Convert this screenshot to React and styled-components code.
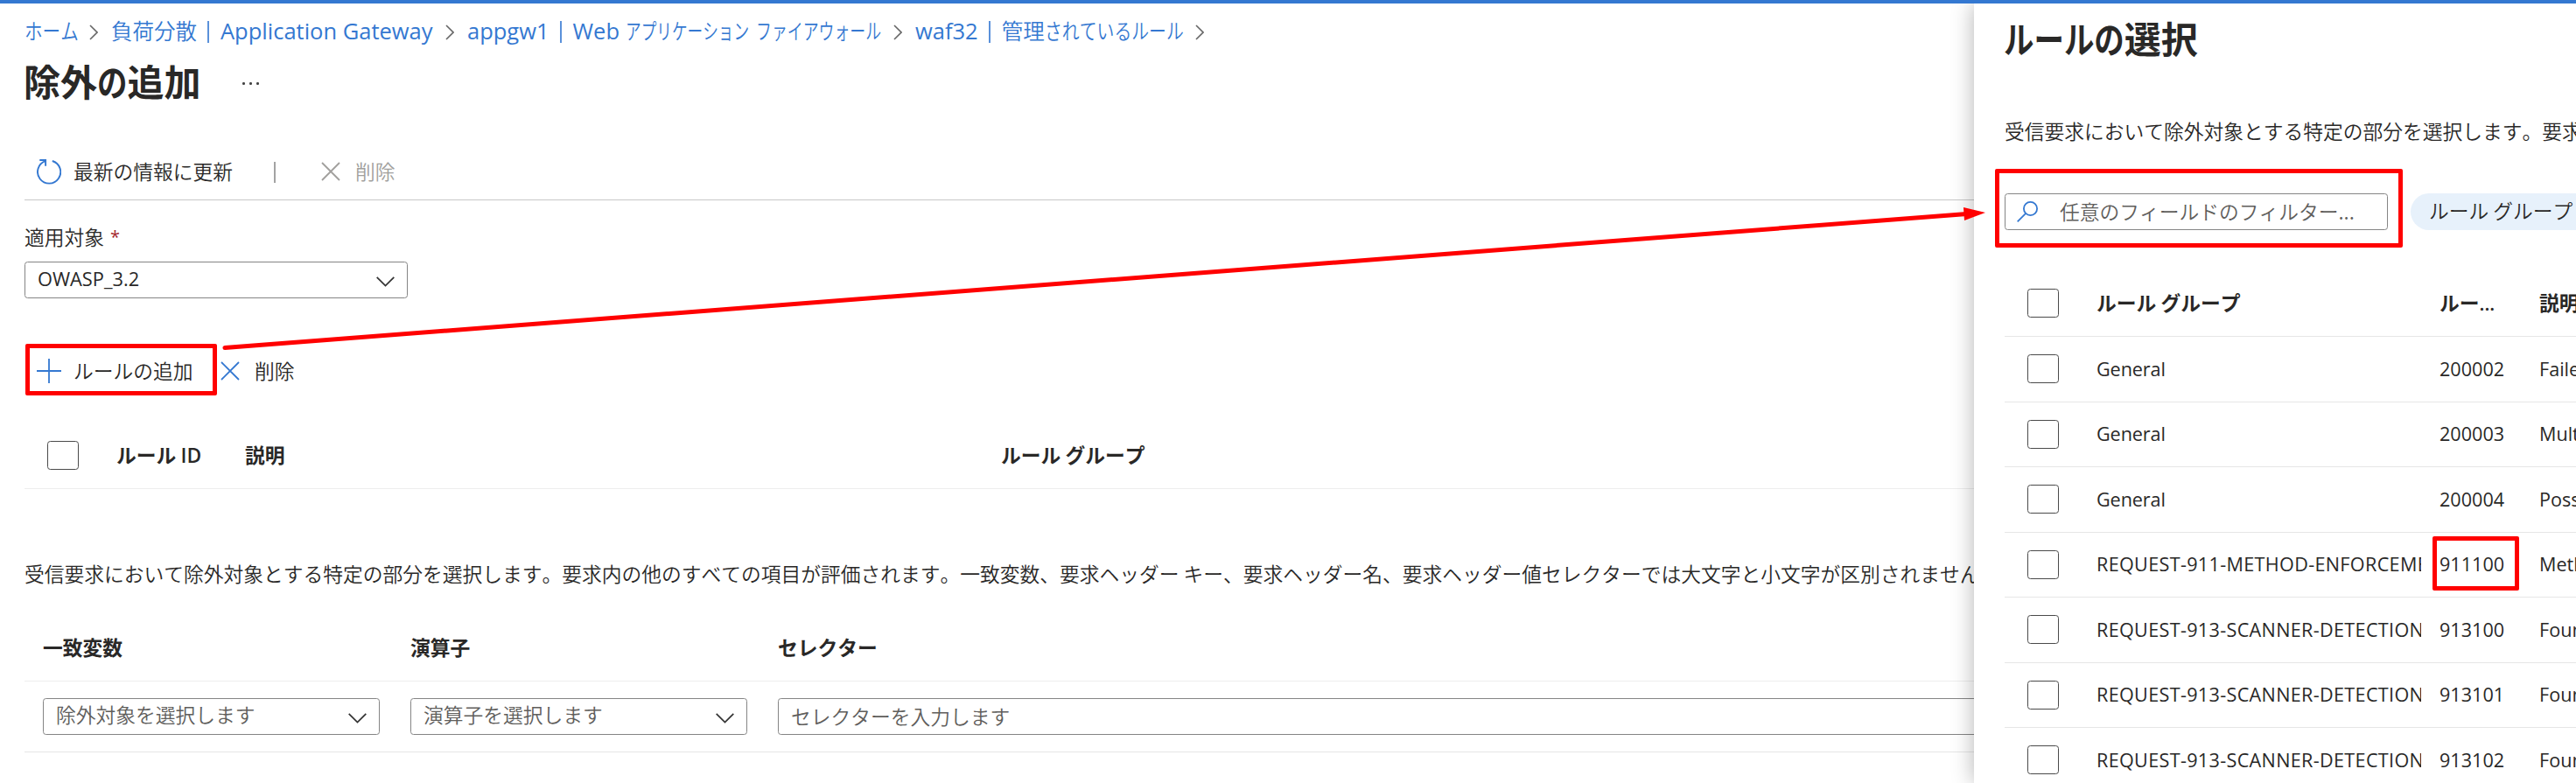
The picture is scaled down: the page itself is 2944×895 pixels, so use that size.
import React from "react";
import styled, { createGlobalStyle } from "styled-components";

const GlobalStyle = createGlobalStyle`
  * { box-sizing: border-box; }
  body {
    margin: 0;
    background: #fff;
    color: #292827;
    font-family: "Open Sans", "Noto Sans CJK JP", sans-serif;
    font-size: 22.75px;
    overflow: hidden;
  }
`;

const Screen = styled.div`
  position: relative;
  width: 2944px;
  height: 895px;
  overflow: hidden;
  display: flex;
  flex-direction: column;
`;
const TopBar = styled.div`
  flex: none;
  height: 4px;
  background: #3478d1;
  z-index: 2;
`;
const Body = styled.div`
  flex: 1;
  display: flex;
  min-height: 0;
`;
const Main = styled.main`
  width: 2256px;
  padding-left: 28px;
  display: flex;
  flex-direction: column;
  white-space: nowrap;
  overflow: hidden;
`;

/* Text runs */
const Ja = styled.span`
  font-family: "Noto Sans CJK JP", sans-serif;
  font-weight: ${(p) => p.$weight || 350};
  font-kerning: none;
  white-space: pre;
`;
const Kana = styled(Ja)`
  display: inline-block;
  width: ${(p) => p.$n}em;
  margin-right: ${(p) => -p.$n * (1 - p.$scale) + (p.$gap || 0)}em;
  transform: scaleX(${(p) => p.$scale});
  transform-origin: left center;
`;
const Latin = styled.span`
  font-size: ${(p) => p.$size || 21.6}px;
  letter-spacing: ${(p) => p.$track || 0}px;
`;

const Breadcrumb = styled.nav`
  flex: none;
  height: 62px;
  display: flex;
  align-items: center;
  color: #3478d1;
  font-size: 24.5px;
  line-height: 36px;
`;
const Crumb = styled.a`
  display: flex;
  align-items: center;
  width: ${(p) => p.$w}px;
`;
const Pipe = styled.span`
  flex: none;
  width: 2px;
  height: 25px;
  margin: 3px 13px 0 12px;
  background: #5a91da;
`;
const CrumbArrow = styled.svg`
  flex: none;
  width: 10px;
  height: 18px;
  margin: 3px 15px 0 14px;
`;
const TitleRow = styled.div`
  flex: none;
  height: 54px;
  display: flex;
  align-items: center;
`;
const Title = styled.h1`
  margin: 0 0 0 -1px;
  font-size: 42px;
  line-height: 54px;
  font-weight: 600;
  white-space: nowrap;
`;
const Dots = styled.div`
  display: flex;
  gap: 5.5px;
  margin: 5px 0 0 48px;
  i { width: 2.5px; height: 2.5px; border-radius: 50%; background: #444; }
`;
const Toolbar = styled.div`
  flex: none;
  height: 109px;
  padding: 0 0 16px 14px;
  border-bottom: 1px solid #c8c8c8;
  display: flex;
  align-items: flex-end;
`;
const Commands = styled.div`
  flex: none;
  height: 56px;
  margin-top: 55px;
  padding-left: 14px;
  display: flex;
  align-items: center;
`;
const Command = styled.button`
  display: flex;
  align-items: center;
  gap: ${(p) => p.$gap}px;
  width: ${(p) => p.$w}px;
  height: 32px;
  padding: 0;
  border: 0;
  background: none;
  font: inherit;
  line-height: 32px;
  color: ${(p) => (p.$disabled ? "#a19f9d" : "inherit")};
  svg { flex: none; }
`;
const ToolDivider = styled.span`
  width: 2px;
  height: 24px;
  margin: 0 52px 3px 0;
  background: #a3a3a3;
`;
const Label = styled.label`
  flex: none;
  height: 28px;
  margin: 28px 0 14px;
  line-height: 28px;
  display: flex;
  gap: 7px;
  b { color: #a4262c; font-weight: 400; font-size: 20px; }
`;
const Field = styled.div`
  flex: none;
  width: ${(p) => p.$w}px;
  height: 42px;
  margin-right: ${(p) => p.$mr || 0}px;
  border: 1.75px solid #858585;
  border-radius: 3.5px;
  padding: 0 14px;
  display: flex;
  align-items: center;
  justify-content: space-between;
  line-height: 36px;
  color: ${(p) => (p.$placeholder ? "#605e5c" : "inherit")};
  span { padding-bottom: ${(p) => p.$lift || 0}px; }
  svg { margin-top: 3px; }
`;
const HeadRow = styled.div`
  flex: none;
  height: ${(p) => p.$h}px;
  padding: ${(p) => p.$pt}px 0 0 ${(p) => p.$pl}px;
  border-bottom: 1px solid #ededed;
  display: flex;
  align-items: center;
  font-weight: 600;
`;
const HeadCell = styled.div`
  flex: none;
  width: ${(p) => p.$w}px;
  line-height: 32px;
`;
const Note = styled.p`
  flex: none;
  margin: ${(p) => p.$mt}px 0 0;
  height: 40px;
  line-height: 40px;
`;
const MatchRow = styled.div`
  flex: none;
  height: 81px;
  padding-left: 21px;
  border-bottom: 1px solid #e6e6e6;
  display: flex;
  align-items: center;
`;
const Checkbox = styled.span`
  flex: none;
  width: 36px;
  height: 33px;
  margin-right: 43px;
  border: 1.75px solid #4a4a4a;
  border-radius: 3.5px;
`;

/* Side panel */
const Panel = styled.aside`
  flex: none;
  position: relative;
  width: 688px;
  padding-left: 35px;
  background: #fff;
  box-shadow: 0 0 24px rgba(0, 0, 0, 0.3);
  display: flex;
  flex-direction: column;
  white-space: nowrap;
`;
const PanelHead = styled.div`
  flex: none;
  height: 80px;
  display: flex;
  align-items: center;
`;
const Filters = styled.div`
  flex: none;
  margin-top: 51px;
  height: 42px;
  display: flex;
  gap: 26px;
`;
const Search = styled.div`
  flex: none;
  width: 438px;
  height: 42px;
  border: 1.75px solid #858585;
  border-radius: 3.5px;
  padding-left: 13px;
  display: flex;
  align-items: center;
  gap: 25px;
  line-height: 36px;
  color: #605e5c;
`;
const Chip = styled.div`
  flex: none;
  width: 240px;
  height: 42px;
  padding-left: 21px;
  border-radius: 21px;
  background: #e7f1fb;
  line-height: 40px;
`;
const PanelTable = styled.div`
  display: flex;
  flex-direction: column;
`;
const PanelRow = styled.div`
  flex: none;
  height: ${(p) => (p.$head ? 122 : 74.5)}px;
  padding: ${(p) => (p.$head ? 45 : 0)}px 0 0 26px;
  border-bottom: 1px solid #e6e6e6;
  display: flex;
  align-items: center;
  font-weight: ${(p) => (p.$head ? 600 : 400)};
`;
const Cell = styled.div`
  flex: none;
  width: ${(p) => p.$w}px;
  margin-right: ${(p) => p.$mr || 0}px;
  overflow: hidden;
  line-height: 36px;
`;

/* Annotations drawn over the page */
const Highlight = styled.div`
  position: absolute;
  z-index: 3;
  left: ${(p) => p.$x}px;
  top: ${(p) => p.$y}px;
  width: ${(p) => p.$w}px;
  height: ${(p) => p.$h}px;
  border: 5px solid #ff0000;
  border-radius: 2px;
`;
const ArrowLayer = styled.svg`
  position: absolute;
  z-index: 3;
  left: 0;
  top: 0;
  pointer-events: none;
`;

const ChevronRight = () => (
  <CrumbArrow viewBox="0 0 10 18" fill="none" stroke="#666" strokeWidth="1.6">
    <path d="M1 1l8 8-8 8" />
  </CrumbArrow>
);
const ChevronDown = () => (
  <svg width="21" height="12" viewBox="0 0 21 12" fill="none" stroke="#333" strokeWidth="1.7">
    <path d="M.7.8l9.800 9.800L20.300.8" />
  </svg>
);
const Cross = ({ color }) => (
  <svg width="22" height="22" viewBox="0 0 22 22" fill="none" stroke={color} strokeWidth="1.8">
    <path d="M1 1l20 20M21 1L1 21" />
  </svg>
);
const Plus = () => (
  <svg width="28" height="28" viewBox="0 0 28 28" fill="none" stroke="#3478d1" strokeWidth="1.8">
    <path d="M14 0v28M0 14h28" />
  </svg>
);
const Refresh = () => (
  <svg width="28" height="30" viewBox="0 0 28 30" fill="none" stroke="#3478d1" strokeWidth="1.9">
    <path d="M17.800 3A13.100 13.100 0 1 1 9.800 3.200" />
    <path d="M3.300 2h6.800v6.800" />
  </svg>
);
const Magnifier = () => (
  <svg width="24" height="24" viewBox="0 0 24 24" fill="none" stroke="#3478d1" strokeWidth="1.8">
    <circle cx="15.500" cy="8.500" r="7.600" />
    <path d="M10.200 13.900L.7 23.300" />
  </svg>
);

const RULES = [
  ["General", "200002", "Failed to parse"],
  ["General", "200003", "Multipart request"],
  ["General", "200004", "Possible Multipart"],
  ["REQUEST-911-METHOD-ENFORCEMENT", "911100", "Method is not allowed"],
  ["REQUEST-913-SCANNER-DETECTION", "913100", "Found User-Agent"],
  ["REQUEST-913-SCANNER-DETECTION", "913101", "Found User-Agent"],
  ["REQUEST-913-SCANNER-DETECTION", "913102", "Found User-Agent"],
];

export default function App() {
  return (
    <Screen>
      <GlobalStyle />
      <TopBar />
      <Body>
        <Main>
          <Breadcrumb>
            <Crumb $w={60}><Kana $n={3} $scale={0.84}>ホーム</Kana></Crumb>
            <ChevronRight />
            <Crumb $w={368}>
              <Ja>負荷分散</Ja><Pipe /><Latin $size={25.5}>Application Gateway</Latin>
            </Crumb>
            <ChevronRight />
            <Crumb $w={473}>
              <Latin $size={25.5}>appgw1</Latin><Pipe /><Latin $size={25.5}>Web&nbsp;</Latin>
              <Kana $n={8} $scale={0.72} $gap={0.32}>アプリケーション</Kana>
              <Kana $n={8} $scale={0.73}>ファイアウォール</Kana>
            </Crumb>
            <ChevronRight />
            <Crumb $w={306}>
              <Latin $size={25.5}>waf32</Latin><Pipe /><Ja>管理</Ja>
              <Kana $n={8} $scale={0.81}>されているルール</Kana>
            </Crumb>
            <ChevronRight />
          </Breadcrumb>

          <TitleRow>
            <Title>
              <Ja $weight={600}>除外</Ja><Kana $weight={600} $n={1} $scale={0.82}>の</Kana><Ja $weight={600}>追加</Ja>
            </Title>
            <Dots><i /><i /><i /></Dots>
          </TitleRow>

          <Toolbar>
            <Command $gap={14} $w={271}><Refresh /><Ja>最新の情報に更新</Ja></Command>
            <ToolDivider />
            <Command $gap={17} $w={100} $disabled><Cross color="#a19f9d" /><Ja>削除</Ja></Command>
          </Toolbar>

          <Label><Ja>適用対象</Ja><b>*</b></Label>
          <Field $w={438} $lift={3}>
            <Latin $size={21.8}>OWASP_3.2</Latin>
            <ChevronDown />
          </Field>

          <Commands>
            <Command $gap={14} $w={210}><Plus /><Ja>ルールの追加</Ja></Command>
            <Command $gap={17} $w={100}><Cross color="#3478d1" /><Ja>削除</Ja></Command>
          </Commands>

          <HeadRow $h={107} $pt={30} $pl={26}>
            <Checkbox />
            <HeadCell $w={147}><Ja $weight={600}>ルール </Ja><Latin $size={22.8}>ID</Latin></HeadCell>
            <HeadCell $w={864}><Ja $weight={600}>説明</Ja></HeadCell>
            <HeadCell $w={400}><Ja $weight={600}>ルール グループ</Ja></HeadCell>
          </HeadRow>

          <Note $mt={77}>
            <Ja>受信要求において除外対象とする特定の部分を選択します。要求内の他のすべての項目が評価されます。一致変数、要求ヘッダー キー、要求ヘッダー名、要求ヘッダー値セレクターでは大文字と小文字が区別されません。</Ja>
          </Note>

          <HeadRow $h={103} $pt={26} $pl={21}>
            <HeadCell $w={420}><Ja $weight={600}>一致変数</Ja></HeadCell>
            <HeadCell $w={420}><Ja $weight={600}>演算子</Ja></HeadCell>
            <HeadCell $w={400}><Ja $weight={600}>セレクター</Ja></HeadCell>
          </HeadRow>
          <MatchRow>
            <Field $w={385} $mr={35} $lift={4} $placeholder><Ja>除外対象を選択します</Ja><ChevronDown /></Field>
            <Field $w={385} $mr={35} $lift={4} $placeholder><Ja>演算子を選択します</Ja><ChevronDown /></Field>
            <Field $w={1420} $placeholder><Ja>セレクターを入力します</Ja></Field>
          </MatchRow>
        </Main>

        <Panel>
          <PanelHead>
            <Title as="h2">
              <Kana $weight={600} $n={4} $scale={0.82}>ルールの</Kana><Ja $weight={600}>選択</Ja>
            </Title>
          </PanelHead>
          <Note $mt={46}><Ja>受信要求において除外対象とする特定の部分を選択します。要求内</Ja></Note>
          <Filters>
            <Search><Magnifier /><Ja>任意のフィールドのフィルター...</Ja></Search>
            <Chip><Ja>ルール グループ</Ja></Chip>
          </Filters>
          <PanelTable>
            <PanelRow $head>
              <Checkbox />
              <Cell $w={371} $mr={21}><Ja $weight={600}>ルール グループ</Ja></Cell>
              <Cell $w={94} $mr={20}><Ja $weight={600}>ルー</Ja><Latin>...</Latin></Cell>
              <Cell $w={100}><Ja $weight={600}>説明</Ja></Cell>
            </PanelRow>
            {RULES.map(([group, id, text]) => (
              <PanelRow key={id}>
                <Checkbox />
                <Cell $w={371} $mr={21}>
                  <Latin $track={group === "General" ? -0.1 : 0.33}>{group}</Latin>
                </Cell>
                <Cell $w={94} $mr={20}><Latin>{id}</Latin></Cell>
                <Cell $w={100}><Latin>{text}</Latin></Cell>
              </PanelRow>
            ))}
          </PanelTable>
        </Panel>
      </Body>

      <Highlight $x={29} $y={393} $w={219} $h={59} />
      <Highlight $x={2280} $y={193} $w={466} $h={90} />
      <Highlight $x={2780} $y={613} $w={99} $h={62} />
      <ArrowLayer width="2944" height="895" viewBox="0 0 2944 895">
        <path d="M257 397.500L2248 244.500" stroke="#ff0000" strokeWidth="5" strokeLinecap="round" />
        <path d="M2244 237L2269 243L2245 252Z" fill="#ff0000" />
      </ArrowLayer>
    </Screen>
  );
}
